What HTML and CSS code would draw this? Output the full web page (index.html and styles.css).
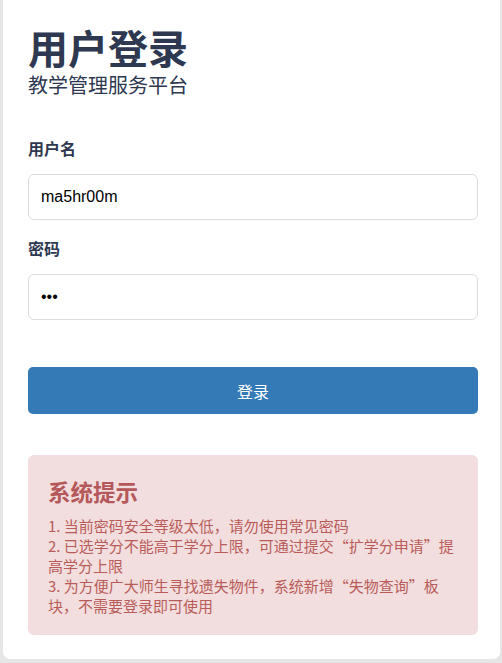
FILE: index.html
```html
<!DOCTYPE html>
<html lang="zh-CN">
<head>
<meta charset="utf-8">
<title>用户登录</title>
<link rel="stylesheet" href="styles.css">
</head>
<body>
<div class="card">
  <h1 class="title">用户登录</h1>
  <div class="subtitle">教学管理服务平台</div>
  <form class="form">
    <label class="label" for="u">用户名</label>
    <input class="input" id="u" type="text" value="ma5hr00m">
    <label class="label label-2" for="p">密码</label>
    <input class="input" id="p" type="password" value="abc">
    <button class="btn" type="button">登录</button>
  </form>
  <div class="notice">
    <h2 class="notice-title">系统提示</h2>
    <div class="notice-text">
      1. 当前密码安全等级太低，请勿使用常见密码<br>
      2. 已选学分不能高于学分上限，可通过提交“扩学分申请”提高学分上限<br>
      3. 为方便广大师生寻找遗失物件，系统新增“失物查询”板块，不需要登录即可使用
    </div>
  </div>
</div>
</body>
</html>
```

FILE: styles.css
```css
html, body {
  margin: 0;
  padding: 0;
  background: #e6e6e6;
}
body {
  padding: 0 2px 5px 3px;
  font-family: "Noto Sans CJK SC", "Liberation Sans", sans-serif;
}
.card {
  background: #ffffff;
  border-radius: 0 0 7px 7px;
  padding: 24px 22px 24px 25px;
}
.title {
  margin: 0;
  font-size: 40px;
  line-height: 47px;
  font-weight: 700;
  color: #2e3850;
}
.subtitle {
  margin-top: 2px;
  font-size: 20px;
  line-height: 24px;
  color: #2e3850;
}
.form {
  display: flex;
  flex-direction: column;
  margin-top: 39px;
}
.label {
  font-size: 16px;
  line-height: 24px;
  font-weight: 700;
  color: #2e3850;
  margin-bottom: 14px;
}
.label-2 {
  margin-top: 16px;
}
.input {
  box-sizing: border-box;
  height: 46px;
  border: 1px solid #dcdcdc;
  border-radius: 6px;
  padding: 0 12px;
  font-family: "Liberation Sans", sans-serif;
  font-size: 16px;
  color: #000;
  background: #fff;
  outline: none;
  margin: 0;
}
.btn {
  margin-top: 47px;
  height: 47px;
  border: 0;
  border-radius: 5px;
  background: #337ab7;
  color: #ffffff;
  font-family: "Noto Sans CJK SC", sans-serif;
  font-size: 16px;
}
.notice {
  margin-top: 41px;
  background: #f2dede;
  border-radius: 6px;
  padding: 20px 20px 19px 20px;
  color: #b95c59;
}
.notice-title {
  margin: 0 0 9px 0;
  font-size: 22.5px;
  line-height: 32px;
  font-weight: 700;
  color: #b5585a;
}
.notice-text {
  font-size: 15px;
  line-height: 20px;
}
```
